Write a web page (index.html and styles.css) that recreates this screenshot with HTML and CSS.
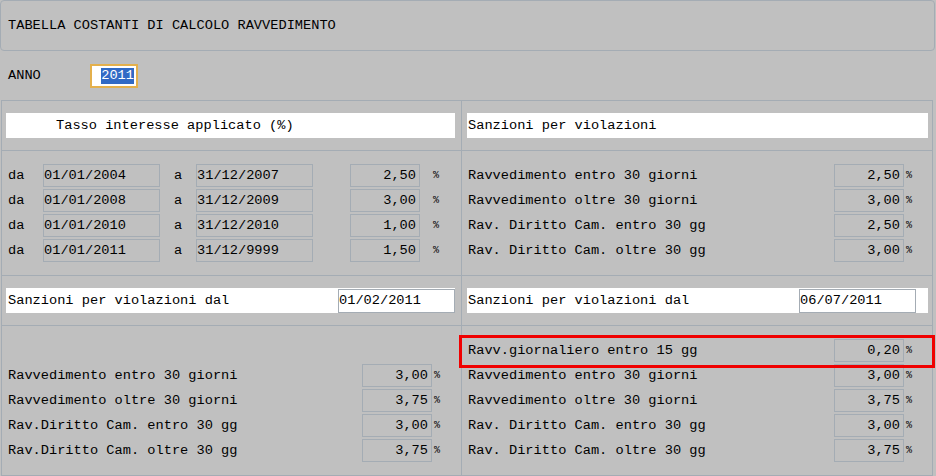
FILE: index.html
```html
<!DOCTYPE html>
<html lang="it">
<head>
<meta charset="utf-8">
<title>Tabella costanti di calcolo ravvedimento</title>
<link rel="stylesheet" href="styles.css">
</head>
<body>
<div class="title">TABELLA COSTANTI DI CALCOLO RAVVEDIMENTO</div>

<div class="anno-row">
  <span class="anno-label">ANNO</span>
  <div class="anno-input"><span class="sel">2011</span></div>
</div>

<div class="main">
  <div class="cell head-cell left">
    <div class="bar bar-left bar-indent">Tasso interesse applicato (%)</div>
  </div>
  <div class="cell head-cell right">
    <div class="bar bar-right">Sanzioni per violazioni</div>
  </div>

  <div class="cell rows-cell left">
    <div class="rate-row">
      <span>da</span><span class="box date">01/01/2004</span><span class="a">a</span><span class="box date">31/12/2007</span><span></span><span class="box num">2,50</span><span class="pct pct-far">%</span>
    </div>
    <div class="rate-row">
      <span>da</span><span class="box date">01/01/2008</span><span class="a">a</span><span class="box date">31/12/2009</span><span></span><span class="box num">3,00</span><span class="pct pct-far">%</span>
    </div>
    <div class="rate-row">
      <span>da</span><span class="box date">01/01/2010</span><span class="a">a</span><span class="box date">31/12/2010</span><span></span><span class="box num">1,00</span><span class="pct pct-far">%</span>
    </div>
    <div class="rate-row">
      <span>da</span><span class="box date">01/01/2011</span><span class="a">a</span><span class="box date">31/12/9999</span><span></span><span class="box num">1,50</span><span class="pct pct-far">%</span>
    </div>
  </div>
  <div class="cell rows-cell right">
    <div class="sanz-row sanz-right"><span>Ravvedimento entro 30 giorni</span><span class="box num">2,50</span><span class="pct">%</span></div>
    <div class="sanz-row sanz-right"><span>Ravvedimento oltre 30 giorni</span><span class="box num">3,00</span><span class="pct">%</span></div>
    <div class="sanz-row sanz-right"><span>Rav. Diritto Cam. entro 30 gg</span><span class="box num">2,50</span><span class="pct">%</span></div>
    <div class="sanz-row sanz-right"><span>Rav. Diritto Cam. oltre 30 gg</span><span class="box num">3,00</span><span class="pct">%</span></div>
  </div>

  <div class="cell head-cell left">
    <div class="bar bar-left bar-dal">
      <span class="dal-label">Sanzioni per violazioni dal</span>
      <span class="dal-input">01/02/2011</span>
    </div>
  </div>
  <div class="cell head-cell right">
    <div class="bar bar-right bar-dal bar-dal-right">
      <span class="dal-label">Sanzioni per violazioni dal</span>
      <span class="dal-input">06/07/2011</span>
    </div>
  </div>

  <div class="cell rows-cell left rows-offset">
    <div class="sanz-row sanz-left"><span>Ravvedimento entro 30 giorni</span><span class="box num">3,00</span><span class="pct">%</span></div>
    <div class="sanz-row sanz-left"><span>Ravvedimento oltre 30 giorni</span><span class="box num">3,75</span><span class="pct">%</span></div>
    <div class="sanz-row sanz-left"><span>Rav.Diritto Cam. entro 30 gg</span><span class="box num">3,00</span><span class="pct">%</span></div>
    <div class="sanz-row sanz-left"><span>Rav.Diritto Cam. oltre 30 gg</span><span class="box num">3,75</span><span class="pct">%</span></div>
  </div>
  <div class="cell rows-cell right marked">
    <div class="highlight"></div>
    <div class="sanz-row sanz-right"><span>Ravv.giornaliero entro 15 gg</span><span class="box num">0,20</span><span class="pct">%</span></div>
    <div class="sanz-row sanz-right"><span>Ravvedimento entro 30 giorni</span><span class="box num">3,00</span><span class="pct">%</span></div>
    <div class="sanz-row sanz-right"><span>Ravvedimento oltre 30 giorni</span><span class="box num">3,75</span><span class="pct">%</span></div>
    <div class="sanz-row sanz-right"><span>Rav. Diritto Cam. entro 30 gg</span><span class="box num">3,00</span><span class="pct">%</span></div>
    <div class="sanz-row sanz-right"><span>Rav. Diritto Cam. oltre 30 gg</span><span class="box num">3,75</span><span class="pct">%</span></div>
  </div>
</div>
</body>
</html>
```

FILE: styles.css
```css
* { box-sizing: border-box; }

html, body {
  margin: 0;
  padding: 0;
  background: #c0c0c0;
}

body {
  width: 936px;
  height: 476px;
  overflow: hidden;
  font-family: "Liberation Mono", "DejaVu Sans Mono", monospace;
  font-size: 13.67px;
  line-height: 16px;
  color: #000;
}

.title {
  width: 935px;
  height: 51px;
  border: 1px solid #a4acb4;
  border-radius: 4px;
  display: flex;
  align-items: center;
  padding-left: 7px;
  padding-top: 1px;
  white-space: nowrap;
}

.anno-row {
  height: 49px;
  display: flex;
  align-items: center;
  padding-left: 8px;
}

.anno-label {
  width: 82px;
}

.anno-input {
  width: 48px;
  height: 24px;
  border: 2px solid #e4b04c;
  background: #fff;
  display: flex;
  align-items: center;
  justify-content: flex-end;
  padding-right: 2px;
}

.sel {
  background: #316ac5;
  color: #fff;
  line-height: 16px;
}

.main {
  margin-left: 1px;
  width: 932px;
  display: grid;
  grid-template-columns: 459px 470px;
  grid-template-rows: 49px 124px 49px 149px;
  gap: 1px;
  background: #a4acb4;
  border: 1px solid #a4acb4;
}

.cell {
  background: #c0c0c0;
  white-space: nowrap;
}

.head-cell {
  padding-top: 12px;
}

.head-cell.left { padding-left: 4px; }
.head-cell.right { padding-left: 5px; }

.bar {
  height: 25px;
  background: #fff;
  display: flex;
  align-items: center;
}

.bar-left { width: 449px; padding-left: 2px; }
.bar-right { width: 461px; padding-left: 1px; }
.bar-indent { padding-left: 50px; }

.bar-dal { justify-content: space-between; }
.bar-dal-right { padding-right: 12px; }

.dal-input {
  width: 117px;
  height: 24px;
  background: #fff;
  border: 1px solid #a4acb4;
  display: flex;
  align-items: center;
  padding-left: 0;
}

.rows-cell {
  padding-top: 13px;
  display: flex;
  flex-direction: column;
  gap: 2px;
}

.rows-cell.left { padding-left: 6px; }
.rows-cell.right { padding-left: 6px; }
.rows-offset { padding-top: 38px; }

.marked { position: relative; }

.highlight {
  position: absolute;
  left: -3px;
  top: 9px;
  width: 476px;
  height: 33px;
  border: 3px solid #f00000;
}

.rate-row {
  height: 23px;
  display: grid;
  grid-template-columns: 35px 117px 36px 117px 37px 70px auto;
  align-items: center;
}

.a { padding-left: 14px; }

.sanz-row {
  height: 23px;
  display: grid;
  align-items: center;
}

.sanz-right { grid-template-columns: 366px 70px auto; }
.sanz-left { grid-template-columns: 354px 70px auto; }

.box {
  height: 23px;
  border: 1px solid #a4acb4;
  display: flex;
  align-items: center;
}

.date { padding-left: 0; }

.num {
  justify-content: flex-end;
  padding-right: 3px;
}

.pct {
  font-size: 10px;
  padding-left: 2px;
}

.pct-far { padding-left: 13px; }
```
